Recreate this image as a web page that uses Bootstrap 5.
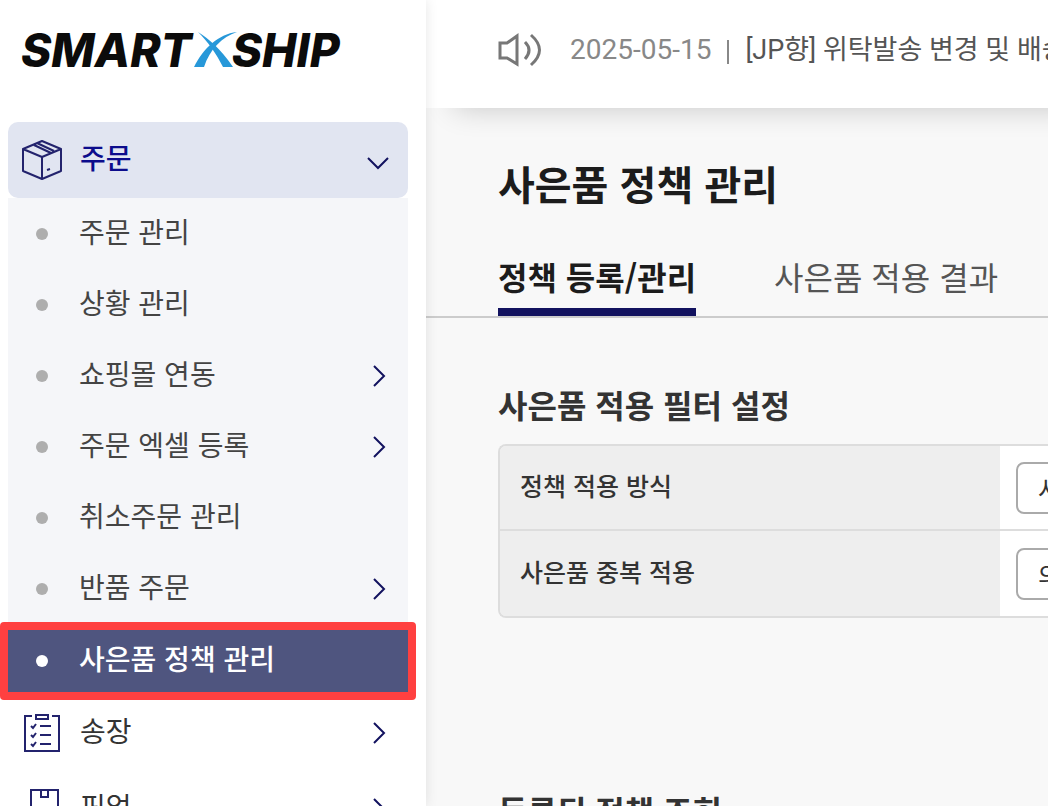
<!DOCTYPE html>
<html lang="ko">
<head>
<meta charset="utf-8">
<meta name="viewport" content="width=device-width, initial-scale=1">
<title>SMARTXSHIP - 사은품 정책 관리</title>
<link href="https://cdn.jsdelivr.net/npm/bootstrap@5.3.0/dist/css/bootstrap.min.css" rel="stylesheet">
<style>
  :root { --navy: #12125f; }
  body { font-family: "Noto Sans CJK KR", sans-serif; font-size: 28px; line-height: 40px; color: #333; background: #f8f8f8; }
  a { color: inherit; text-decoration: none; }
  .app-shell { height: 100vh; }
  .side-panel { width: 426px; padding: 0 18px 0 8px; background: #fff; box-shadow: 0 0 12px rgba(0,0,0,.1); z-index: 2; }
  .brand { height: 122px; padding: 0 0 22px 13px; font: italic 800 46px/1 Inter, sans-serif; color: #0b0b0b; }
  .brand svg { margin: 0 -6px 0 2px; }
  .side-link { height: 76px; padding: 0 18px 0 14px; }
  .side-link .label-text { margin: 0 auto 6px 18px; }
  .side-link.open { background: #e1e5f1; border-radius: 10px; color: #0c0c8c; font-weight: 500; }
  .side-link.open .chevron { margin-top: 5px; }
  .sub-menu { background: #f5f6f9; }
  .sub-link { height: 71px; padding: 0 18px 0 28px; color: #444; }
  .sub-link .label-text { margin: 0 auto 6px 31px; }
  .dot { width: 12px; height: 12px; border-radius: 50%; background: #aeaeae; }
  .current-wrap { background: #fff; height: 73px; }
  .sub-link.current { height: 78px; margin: -2px -8px 0; padding: 0 26px 0 28px; border: 8px solid #ff4040; border-radius: 4px; background: #4f557f; color: #fff; font-weight: 500; }
  .sub-link.current .dot { background: #fff; }
  .main-panel { min-width: 0; }
  .top-bar { height: 108px; padding: 0 0 8px 72px; background: #fff; box-shadow: 28px 0 28px rgba(0,0,0,.2); white-space: nowrap; font-family: Roboto, "Noto Sans CJK KR", sans-serif; font-size: 27px; color: #555; }
  .top-bar time { font-size: 28px; color: #888; margin-left: 28px; }
  .sep { width: 2px; height: 24px; background: #888; margin: 4px 16px 0 16px; }
  .page-title { margin: 45px 0 0 72px; font-size: 40px; line-height: 60px; font-weight: 700; color: #1c1c1c; }
  .tab-row { margin-top: 35px; padding-left: 72px; gap: 78px; border-bottom: 2px solid #ccc; font-size: 32px; white-space: nowrap; color: #555; }
  .tab-row a { height: 68px; line-height: 56px; border-bottom: 8px solid transparent; }
  .tab-row a.active { border-color: var(--navy); font-weight: 700; color: #1c1c1c; }
  .section-title { margin: 0; font-size: 32px; line-height: 48px; font-weight: 700; color: #333; white-space: nowrap; }
  .content-area { padding: 62px 0 0 72px; }
  .filter-box { margin: 16px 0 168px; border: 2px solid #ddd; border-right: 0; border-radius: 8px 0 0 8px; overflow: hidden; }
  .filter-table { width: 100%; table-layout: fixed; font-size: 25px; }
  .filter-table th { width: 500px; height: 84px; padding: 0 0 6px 20px; background: #eee; font-weight: 500; }
  .filter-table td { padding: 0 0 0 16px; background: #fff; }
  .filter-table tr + tr > * { border-top: 2px solid #ddd; height: 86px; }
  .filter-table select { width: 320px; height: 52px; padding: 0 20px; border: 2px solid #aaa; border-radius: 8px; background: #fff; color: #333; font-size: 25px; appearance: none; display: block; }
</style>
</head>
<body>
<div class="app-shell d-flex overflow-hidden">
  <aside class="side-panel flex-shrink-0 position-relative">
    <a class="brand d-flex align-items-center" href="#" aria-label="SMARTXSHIP">
      <span>SMART</span>
      <svg width="44" height="36" viewBox="0 0 44 36" fill="#2798d9" aria-hidden="true"><path d="M4 0C15 7 26 16 39 35H29C22 21 14 10 4 0Z"/><path d="M43 0C28 5 16 17 10 35H0C9 17 24 2 43 0Z"/></svg>
      <span>SHIP</span>
    </a>
    <nav>
      <a class="side-link open d-flex align-items-center" href="#">
        <svg width="40" height="40" viewBox="0 0 40 40" fill="none" stroke="#23236d" stroke-width="2" stroke-linejoin="round"><path d="M20 1 39 9V31L20 39 1 31V9ZM1 9l19 8 19-8M20 17v22M12 5l17 8M15 3l17 8M25 30l3-1"/></svg>
        <span class="label-text">주문</span>
        <svg class="chevron" width="24" height="14" viewBox="0 0 24 14" fill="none" stroke="#12125f" stroke-width="2"><path d="m2 2 10 10L22 2"/></svg>
      </a>
      <div class="sub-menu">
        <a class="sub-link d-flex align-items-center" href="#"><i class="dot"></i><span class="label-text">주문 관리</span></a>
        <a class="sub-link d-flex align-items-center" href="#"><i class="dot"></i><span class="label-text">상황 관리</span></a>
        <a class="sub-link d-flex align-items-center" href="#"><i class="dot"></i><span class="label-text">쇼핑몰 연동</span><svg class="me-1" width="14" height="24" viewBox="0 0 14 24" fill="none" stroke="#12125f" stroke-width="2"><path d="m2 2 10 10L2 22"/></svg></a>
        <a class="sub-link d-flex align-items-center" href="#"><i class="dot"></i><span class="label-text">주문 엑셀 등록</span><svg class="me-1" width="14" height="24" viewBox="0 0 14 24" fill="none" stroke="#12125f" stroke-width="2"><path d="m2 2 10 10L2 22"/></svg></a>
        <a class="sub-link d-flex align-items-center" href="#"><i class="dot"></i><span class="label-text">취소주문 관리</span></a>
        <a class="sub-link d-flex align-items-center" href="#"><i class="dot"></i><span class="label-text">반품 주문</span><svg class="me-1" width="14" height="24" viewBox="0 0 14 24" fill="none" stroke="#12125f" stroke-width="2"><path d="m2 2 10 10L2 22"/></svg></a>
        <div class="current-wrap"><a class="sub-link current d-flex align-items-center position-relative" href="#" aria-current="page"><i class="dot"></i><span class="label-text">사은품 정책 관리</span></a></div>
      </div>
      <a class="side-link d-flex align-items-center" href="#">
        <svg width="40" height="40" viewBox="0 0 40 40" fill="none" stroke="#23236d" stroke-width="2"><path d="M10 3H3v35h34V3h-7M14 2h12v4H14ZM9 13l2 2 3-4M9 22l2 2 3-4M9 31l2 2 3-4M18 13h11M18 22h11M18 31h11"/></svg>
        <span class="label-text">송장</span>
        <svg class="me-1" width="14" height="24" viewBox="0 0 14 24" fill="none" stroke="#12125f" stroke-width="2"><path d="m2 2 10 10L2 22"/></svg>
      </a>
      <a class="side-link d-flex align-items-center" href="#">
        <svg width="40" height="40" viewBox="0 0 40 40" fill="none" stroke="#23236d" stroke-width="2"><path d="M9 38V1h27v37ZM19 1v7h7V1"/></svg>
        <span class="label-text">픽업</span>
        <svg class="me-1" width="14" height="24" viewBox="0 0 14 24" fill="none" stroke="#12125f" stroke-width="2"><path d="m2 2 10 10L2 22"/></svg>
      </a>
    </nav>
  </aside>
  <main class="main-panel flex-grow-1">
    <header class="top-bar d-flex align-items-center">
      <svg class="flex-shrink-0" width="44" height="36" viewBox="0 0 44 36" fill="none" stroke="#777" stroke-width="2"><path d="M2 11h7L19 4v28L9 26H2ZM27 10q8 8 0 17M33 3q17 15 0 30" stroke-width="3"/></svg>
      <time datetime="2025-05-15">2025-05-15</time><span class="sep flex-shrink-0"></span>
      <a href="#">[JP향] 위탁발송 변경 및 배송</a>
    </header>
    <h1 class="page-title">사은품 정책 관리</h1>
    <nav class="tab-row d-flex"><a class="active" href="#">정책 등록/관리</a><a href="#">사은품 적용 결과</a></nav>
    <section class="content-area">
      <h2 class="section-title">사은품 적용 필터 설정</h2>
      <div class="filter-box">
        <table class="filter-table">
          <tr><th scope="row"><label for="mode">정책 적용 방식</label></th><td><select id="mode"><option>사은품</option></select></td></tr>
          <tr><th scope="row"><label for="dup">사은품 중복 적용</label></th><td><select id="dup"><option>의</option></select></td></tr>
        </table>
      </div>
      <h2 class="section-title">등록된 정책 조회</h2>
    </section>
  </main>
</div>
<script src="https://cdn.jsdelivr.net/npm/bootstrap@5.3.0/dist/js/bootstrap.bundle.min.js"></script>
</body>
</html>
